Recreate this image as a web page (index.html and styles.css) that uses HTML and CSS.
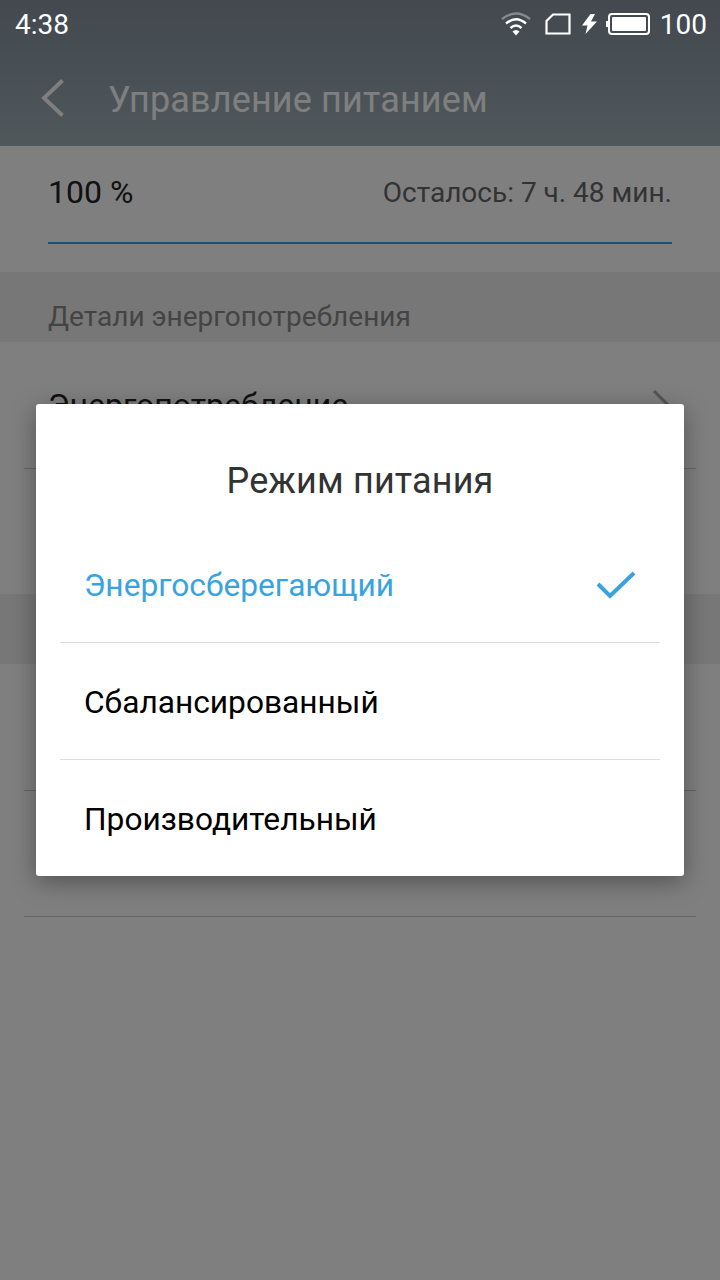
FILE: index.html
```html
<!DOCTYPE html>
<html lang="ru">
  <head>
    <meta charset="UTF-8" />
    <meta name="viewport" content="width=device-width, initial-scale=1.0" />
    <title>Управление питанием</title>
    <link rel="stylesheet" href="styles.css">
  </head>
  <body>
    <div class="page">
      <div class="appbar">
        <svg class="back-icon" width="24" height="38" viewBox="0 0 24 38">
          <path d="M21.500 1.500 L3 19 L21.500 36.500" fill="none" stroke="#fff" stroke-width="3.8" />
        </svg>
        <span class="appbar-title">Управление питанием</span>
      </div>

      <div class="battery-block">
        <div class="battery-row">
          <span class="battery-level">100 %</span>
          <span class="battery-left">Осталось: 7 ч. 48 мин.</span>
        </div>
        <div class="battery-bar"></div>
      </div>

      <div class="band">Детали энергопотребления</div>
      <div class="row">
        <span class="row-label">Энергопотребление</span>
        <svg class="chevron" width="20" height="32" viewBox="0 0 20 32">
          <path d="M2 2 L16 16 L2 30" fill="none" stroke="#aaa" stroke-width="3" />
        </svg>
      </div>
      <div class="row row-plain"></div>
      <div class="band"></div>
      <div class="row"></div>
      <div class="row row-last"></div>
    </div>

    <div class="overlay"></div>

    <!-- Статус-бар -->
    <div class="statusbar">
      <span class="clock">4:38</span>
      <div class="status-icons">
        <svg width="32" height="26" viewBox="0 0 32 26">
          <path d="M2 8 Q16 -3 30 8" fill="none" stroke="#fff" stroke-opacity="0.35" stroke-width="2.4" />
          <path d="M6 12.5 Q16 4 26 12.5" fill="none" stroke="#fff" stroke-width="2.4" />
          <path d="M10.500 17 Q16 12 21.500 17" fill="none" stroke="#fff" stroke-width="2.4" />
          <path d="M12.500 20.500 Q16 17.500 19.500 20.500 L16 24.500 Z" fill="#fff" />
        </svg>
        <svg class="sim-icon" width="26" height="22" viewBox="0 0 26 22">
          <path d="M8 1.500 H24.500 V20.500 H1.500 V8 Z" fill="none" stroke="#fff" stroke-width="2.200" />
        </svg>
        <svg class="bolt-icon" width="15" height="20" viewBox="0 0 15 20">
          <path d="M8.500 0 L0 11.500 H5.500 L3.500 20 L15 7.500 H9 L13 0 Z" fill="#fff" />
        </svg>
        <svg class="batt-icon" width="44" height="24" viewBox="0 0 44 24">
          <rect x="0" y="9" width="2" height="6" fill="#fff" />
          <rect x="3" y="2" width="40" height="20" rx="3" fill="none" stroke="#fff" stroke-width="2" />
          <rect x="6" y="5" width="34" height="14" rx="1" fill="#fff" />
        </svg>
        <span class="batt-text">100</span>
      </div>
    </div>

    <!-- Диалог выбора режима -->
    <div class="dialog">
      <h3 class="dialog-title">Режим питания</h3>
      <div class="option option-active">
        <span>Энергосберегающий</span>
        <svg width="40" height="30" viewBox="0 0 40 30">
          <path d="M2 14 L14 26 L38 3" fill="none" stroke="#38a3e0" stroke-width="4" />
        </svg>
      </div>
      <div class="option"><span>Сбалансированный</span></div>
      <div class="option"><span>Производительный</span></div>
    </div>
  </body>
</html>
```
FILE: styles.css
```css
body {
  margin: 0;
  width: 720px;
  height: 1280px;
  overflow: hidden;
  position: relative;
  background: #fff;
  font-family: Roboto, "Noto Sans", sans-serif;
}

.page {
  display: flex;
  flex-direction: column;
}

.appbar {
  height: 100px;
  padding-top: 46px;
  padding-left: 41px;
  display: flex;
  align-items: center;
  gap: 43px;
  background: linear-gradient(to bottom, #86929e, #a0b0b8);
}

.back-icon {
  margin-bottom: -4px;
}

.appbar-title {
  color: #fff;
  font-size: 36px;
  letter-spacing: 0.15px;
  margin-top: 8px;
}

.battery-block {
  height: 126px;
  padding: 0 48px;
  box-sizing: border-box;
}

.battery-row {
  height: 92px;
  margin-bottom: 4px;
  display: flex;
  justify-content: space-between;
  align-items: center;
}

.battery-level {
  font-size: 32px;
  color: #222;
}

.battery-left {
  font-size: 28px;
  color: #666;
}

.battery-bar {
  height: 2px;
  background: #38a3e0;
}

.band {
  height: 70px;
  box-sizing: border-box;
  padding: 28px 48px 0;
  background: #eee;
  color: #888;
  font-size: 28px;
}

.row {
  height: 127px;
  margin: 0 24px;
  padding: 0 24px;
  box-sizing: border-box;
  display: flex;
  justify-content: space-between;
  align-items: center;
  border-bottom: 1px solid #ccc;
}

.row-plain {
  height: 125px;
  border-bottom: none;
}

.row-last {
  height: 126px;
}

.row-label {
  font-size: 32px;
  color: #222;
}

.overlay {
  position: absolute;
  top: 0;
  left: 0;
  width: 720px;
  height: 1280px;
  background: rgba(0, 0, 0, 0.5);
}

.statusbar {
  position: absolute;
  top: 0;
  left: 0;
  width: 720px;
  height: 48px;
  padding: 0 13px 0 15px;
  box-sizing: border-box;
  display: flex;
  justify-content: space-between;
  align-items: center;
  color: #fff;
  font-size: 28px;
}

.status-icons {
  display: flex;
  align-items: center;
  gap: 13px;
}

.bolt-icon {
  margin-left: -2px;
  margin-right: -4px;
}

.batt-text {
  margin-left: -3px;
}

.dialog {
  position: absolute;
  top: 404px;
  left: 36px;
  width: 648px;
  height: 472px;
  border-radius: 3px;
  background: #fff;
  box-shadow: 0 6px 24px rgba(0, 0, 0, 0.35);
  padding: 0 24px;
  box-sizing: border-box;
}

.dialog-title {
  margin: 0;
  height: 122px;
  padding-top: 54px;
  box-sizing: border-box;
  text-align: center;
  font-size: 36px;
  font-weight: 400;
  letter-spacing: 0.15px;
  line-height: 46px;
  color: #333;
}

.option {
  height: 117px;
  padding: 2px 24px 0;
  box-sizing: border-box;
  display: flex;
  justify-content: space-between;
  align-items: center;
  border-bottom: 1px solid #ddd;
  font-size: 31.7px;
  color: #000;
}

.option:last-child {
  border-bottom: none;
}

.option-active {
  color: #38a3e0;
}
```
